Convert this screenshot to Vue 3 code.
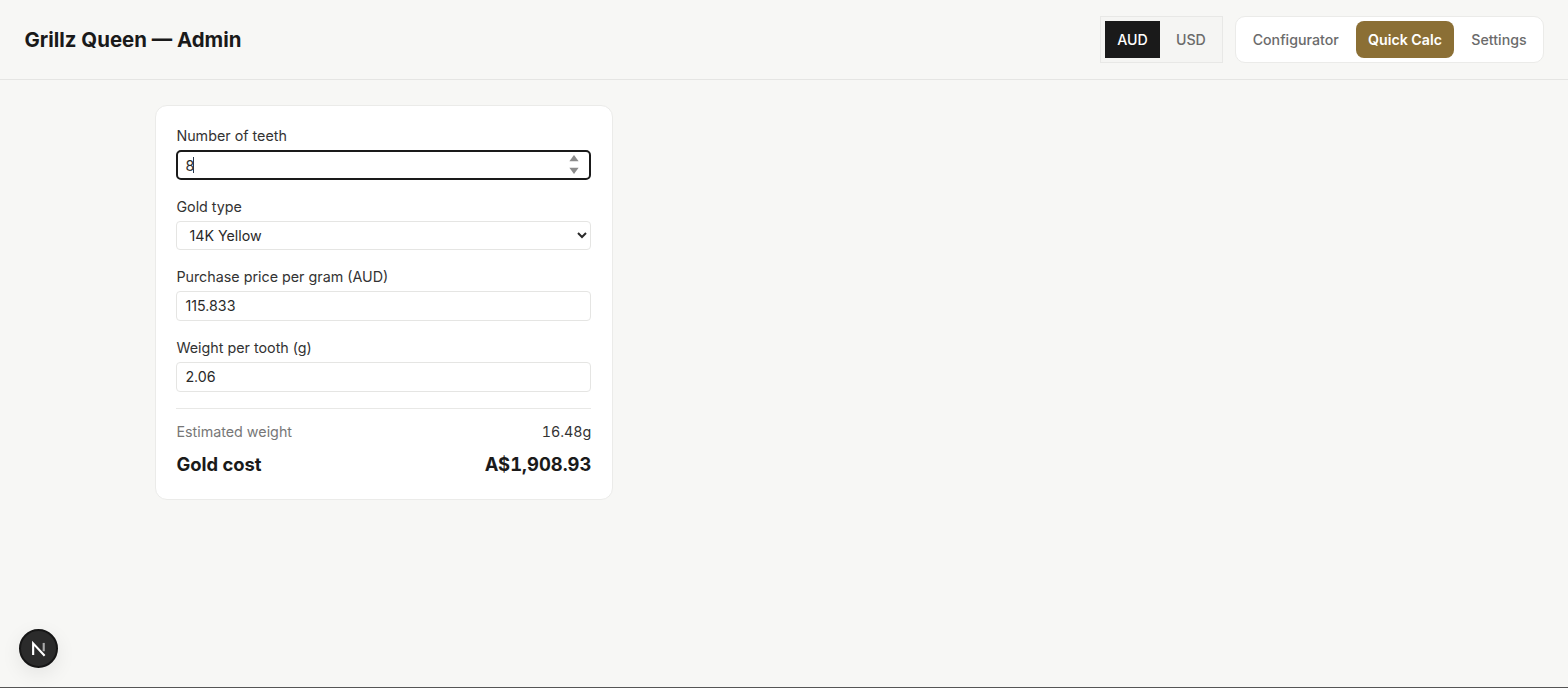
<script setup>
import { onMounted, ref } from 'vue'
const teeth = ref(null)
onMounted(() => {
  teeth.value.focus()
})
</script>

<template>
  <div class="page">
    <header class="topbar">
      <h1 class="title">Grillz Queen — Admin</h1>
      <div class="controls">
        <div class="currency">
          <button class="cur active">AUD</button>
          <button class="cur">USD</button>
        </div>
        <nav class="nav">
          <a class="tab">Configurator</a>
          <a class="tab active">Quick Calc</a>
          <a class="tab">Settings</a>
        </nav>
      </div>
    </header>
    <main class="main">
      <section class="card">
        <label class="field">
          <span class="label">Number of teeth</span>
          <span class="number-wrap">
            <input ref="teeth" class="input number" type="number" value="8" />
            <span class="caret"></span>
            <svg class="spin" width="10" height="19" viewBox="0 0 10 19">
              <path d="M5 0L9.6 6.3H.4Z" fill="#8b8b8b" />
              <path d="M5 19L9.6 12.7H.4Z" fill="#8b8b8b" />
            </svg>
          </span>
        </label>
        <label class="field">
          <span class="label">Gold type</span>
          <select class="input select">
            <option>14K Yellow</option>
          </select>
        </label>
        <label class="field">
          <span class="label">Purchase price per gram (AUD)</span>
          <input class="input plain" type="text" value="115.833" />
        </label>
        <label class="field">
          <span class="label">Weight per tooth (g)</span>
          <input class="input plain" type="text" value="2.06" />
        </label>
        <div class="summary">
          <div class="row">
            <span class="muted">Estimated weight</span>
            <span class="val">16.48g</span>
          </div>
          <div class="row total">
            <span>Gold cost</span>
            <span class="price">A$1,908.93</span>
          </div>
        </div>
      </section>
    </main>
    <div class="devbadge">
      <svg width="18" height="18" viewBox="0 0 16 16" fill="none">
        <path d="M2.8 13.4V3L13 14" stroke="#fff" stroke-width="1.9" />
        <path d="M12.2 2.6V10" stroke="#aaa" stroke-width="1.9" />
      </svg>
    </div>
  </div>
</template>

<style scoped>
.page {
  min-height: 688px;
  box-sizing: border-box;
  background: #f7f7f5;
  border-bottom: 1px solid #555;
  font-family: Inter, "Liberation Sans", sans-serif;
  color: #1a1a1a;
  display: flex;
  flex-direction: column;
  position: relative;
}
.topbar {
  display: flex;
  justify-content: space-between;
  align-items: center;
  height: 80px;
  box-sizing: border-box;
  padding: 0 24.2px 0 24.5px;
  border-bottom: 1px solid #e5e5e3;
}
.title {
  margin: 0;
  font-size: 20.4px;
  font-weight: 700;
  color: #1a1a1a;
}
.controls {
  display: flex;
  gap: 12px;
  align-items: stretch;
}
.currency {
  display: flex;
  gap: 3px;
  padding: 4px;
  height: 47px;
  box-sizing: border-box;
  border: 1px solid #e8e8e6;
  background: #f5f5f3;
}
.cur {
  border: 0;
  background: transparent;
  font: 500 14.2px Inter, sans-serif;
  color: #6b6b6b;
  padding: 0 12.6px;
}
.cur.active {
  background: #1a1a1a;
  color: #fff;
}
.nav {
  display: flex;
  gap: 5px;
  padding: 4px;
  height: 47px;
  box-sizing: border-box;
  background: #fff;
  border: 1px solid #ebebe9;
  border-radius: 10px;
}
.tab {
  display: flex;
  align-items: center;
  padding: 0 12.2px;
  font-size: 14.2px;
  font-weight: 500;
  color: #6b6b6b;
  border-radius: 8px;
}
.tab.active {
  background: #8b6f35;
  color: #fff;
  font-weight: 600;
}
.main {
  flex: 1;
  padding: 25px 0 0 155.4px;
}
.card {
  width: 458px;
  box-sizing: border-box;
  background: #fff;
  border: 1px solid #ebebe9;
  border-radius: 12px;
  padding: 20px 21px 21px 20px;
  display: flex;
  flex-direction: column;
  gap: 17px;
}
.field {
  display: flex;
  flex-direction: column;
  gap: 4px;
}
.label {
  font-size: 14.3px;
  line-height: 20px;
  color: #333;
}
.input {
  box-sizing: border-box;
  width: 100%;
  height: 30px;
  padding: 0 8px;
  font: 14.25px Inter, sans-serif;
  color: #2a2a2a;
  background: #fff;
  border: 1px solid #e5e5e3;
  border-radius: 4px;
  outline: none;
}
.plain {
  padding-bottom: 1px;
}
.input:focus {
  border: 2px solid #1a1a1a;
  padding: 0 7px;
  border-radius: 5px;
}
.number-wrap {
  position: relative;
  display: block;
}
.number {
  display: block;
  appearance: textfield;
  caret-color: transparent;
}
.number::-webkit-inner-spin-button,
.number::-webkit-outer-spin-button {
  appearance: none;
  margin: 0;
}
.caret {
  position: absolute;
  left: 17px;
  top: 7px;
  width: 1px;
  height: 16px;
  background: #27364a;
}
.spin {
  position: absolute;
  right: 12px;
  top: 5px;
}
.select {
  height: 29px;
}
.summary {
  margin-top: -1px;
  border-top: 1px solid #e8e8e6;
  padding-top: 12px;
  display: flex;
  flex-direction: column;
  gap: 7px;
}
.row {
  display: flex;
  justify-content: space-between;
  align-items: center;
  font-size: 14.3px;
  line-height: 22px;
}
.muted {
  color: #777;
}
.val {
  color: #333;
  font-variant-numeric: tabular-nums;
}
.total {
  font-size: 18.4px;
  line-height: 28px;
  font-weight: 700;
}
.price {
  font-variant-numeric: tabular-nums;
}
.devbadge {
  position: absolute;
  left: 19px;
  top: 629px;
  width: 39px;
  height: 39px;
  box-sizing: border-box;
  border-radius: 50%;
  background: #2b2b2b;
  border: 2px solid #161616;
  box-shadow: 0 6px 20px rgba(0, 0, 0, 0.08);
  display: flex;
  align-items: center;
  justify-content: center;
}
</style>

<style>
html, body { margin: 0; background: #f7f7f5; }
</style>
